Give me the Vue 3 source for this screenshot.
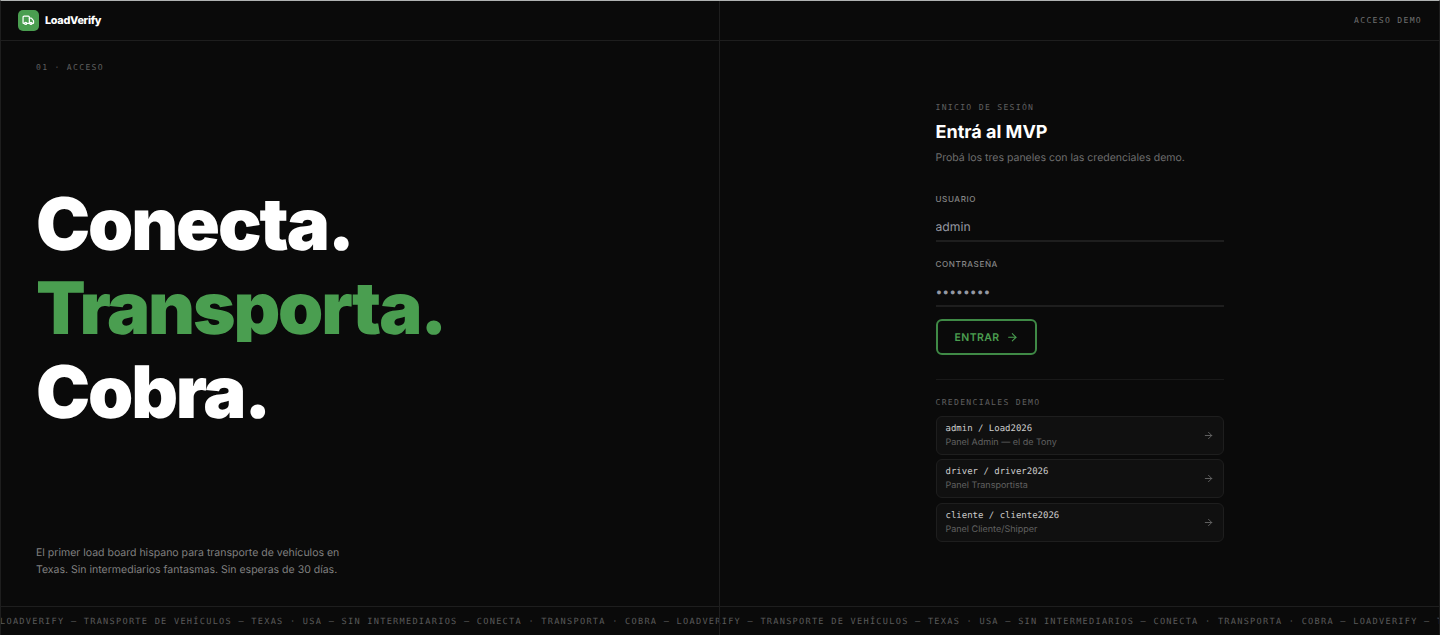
<template>
  <div class="page">
    <header class="nav">
      <div class="brand">
        <span class="brand-icon">
          <svg viewBox="0 0 24 24" class="icon-truck">
            <path d="M14 18V6a2 2 0 0 0-2-2H4a2 2 0 0 0-2 2v11a1 1 0 0 0 1 1h2" />
            <path d="M15 18H9" />
            <path d="M19 18h2a1 1 0 0 0 1-1v-3.65a1 1 0 0 0-.22-.624l-3.48-4.35A1 1 0 0 0 17.52 8H14" />
            <circle cx="17" cy="18" r="2" />
            <circle cx="7" cy="18" r="2" />
          </svg>
        </span>
        <span class="brand-name">LoadVerify</span>
      </div>
      <span class="mono nav-tag">ACCESO DEMO</span>
    </header>

    <main class="main">
      <section class="hero">
        <span class="mono hero-tag">01 · ACCESO</span>
        <h1 class="hero-title">
          <span>Conecta.</span>
          <span class="green">Transporta.</span>
          <span>Cobra.</span>
        </h1>
        <p class="hero-text">
          El primer load board hispano para transporte de vehículos en<br />
          Texas. Sin intermediarios fantasmas. Sin esperas de 30 días.
        </p>
      </section>

      <section class="access">
        <form class="form" @submit.prevent>
          <span class="mono">INICIO DE SESIÓN</span>
          <h2 class="form-title">Entrá al MVP</h2>
          <p class="form-text">Probá los tres paneles con las credenciales demo.</p>

          <label class="field">
            <span class="field-label">USUARIO</span>
            <input v-model="user" type="text" placeholder="admin" class="field-input" />
          </label>
          <label class="field">
            <span class="field-label">CONTRASEÑA</span>
            <input v-model="password" type="password" placeholder="••••••••" class="field-input" />
          </label>

          <button type="submit" class="submit">
            <span>ENTRAR</span>
            <svg viewBox="0 0 24 24" class="icon-arrow">
              <path d="M5 12h14" />
              <path d="m12 5 7 7-7 7" />
            </svg>
          </button>

          <div class="demo">
            <span class="mono demo-tag">CREDENCIALES DEMO</span>
            <button
              v-for="item in accounts"
              :key="item.user"
              type="button"
              class="account"
              @click="fill(item)"
            >
              <span class="account-info">
                <span class="account-key">{{ item.user }} / {{ item.password }}</span>
                <span class="account-panel">{{ item.panel }}</span>
              </span>
              <svg viewBox="0 0 24 24" class="icon-arrow small">
                <path d="M5 12h14" />
                <path d="m12 5 7 7-7 7" />
              </svg>
            </button>
          </div>
        </form>
      </section>
    </main>

    <footer class="ticker">
      <span v-for="n in 3" :key="n" class="ticker-item">{{ tickerText }}</span>
    </footer>
  </div>
</template>

<script setup>
import { ref } from 'vue'

const user = ref('')
const password = ref('')

const accounts = [
  { user: 'admin', password: 'Load2026', panel: 'Panel Admin — el de Tony' },
  { user: 'driver', password: 'driver2026', panel: 'Panel Transportista' },
  { user: 'cliente', password: 'cliente2026', panel: 'Panel Cliente/Shipper' },
]

const tickerText =
  'LOADVERIFY — TRANSPORTE DE VEHÍCULOS — TEXAS · USA — SIN INTERMEDIARIOS — CONECTA · TRANSPORTA · COBRA — '

const fill = (item) => {
  user.value = item.user
  password.value = item.password
}
</script>

<style>
body {
  margin: 0;
  background: #0a0a0a;
}
</style>

<style scoped>
.page {
  position: relative;
  display: flex;
  flex-direction: column;
  box-sizing: border-box;
  height: 635px;
  overflow: hidden;
  border: 1px solid #1e1e1e;
  border-top-color: #b0b3b2;
  border-bottom: none;
  background: #0a0a0a;
  color: #fff;
  font-family: Inter, sans-serif;
  text-rendering: geometricPrecision;
}

/* center rule, runs over nav and ticker */
.page::after {
  content: '';
  position: absolute;
  top: 0;
  bottom: 0;
  left: 718px;
  width: 1px;
  background: #1e1e1e;
}

svg {
  fill: none;
  stroke: currentColor;
  stroke-width: 2;
  stroke-linecap: round;
  stroke-linejoin: round;
}

button,
input {
  text-rendering: inherit;
}

.mono {
  font-family: 'DejaVu Sans Mono', monospace;
  font-size: 8.1px;
  line-height: 12px;
  letter-spacing: 1.3px;
  color: #5f5f5f;
}

.nav {
  display: flex;
  align-items: center;
  justify-content: space-between;
  height: 39px;
  padding: 0 17px;
  border-bottom: 1px solid #1e1e1e;
}

.brand {
  display: flex;
  align-items: center;
  gap: 6px;
}

.brand-icon {
  display: flex;
  align-items: center;
  justify-content: center;
  width: 21px;
  height: 21px;
  border-radius: 5px;
  background: #4a9e50;
}

.icon-truck {
  width: 12.6px;
  height: 12.6px;
  stroke-width: 2.3;
}

.brand-name {
  font-size: 10.8px;
  font-weight: 800;
  letter-spacing: -0.27px;
}

.nav-tag {
  margin-bottom: 1px;
  color: #707070;
}

.main {
  display: flex;
  flex: 1;
}

.hero {
  display: flex;
  flex-direction: column;
  justify-content: space-between;
  box-sizing: border-box;
  width: 50%;
  padding: 20px 35px 28px;
}

.hero-title {
  display: flex;
  flex-direction: column;
  gap: 18px;
  margin: 1px 0 0;
  font-size: 72.5px;
  font-weight: 900;
  line-height: 66px;
  letter-spacing: -2.16px;
}

.hero-title span {
  overflow: hidden;
}

.green {
  color: #4a9e50;
}

.hero-text {
  margin: 0;
  font-size: 10.53px;
  line-height: 17px;
  color: #808080;
}

.access {
  display: flex;
  justify-content: center;
  width: 50%;
}

.form {
  display: flex;
  flex-direction: column;
  width: 288px;
  padding-top: 60px;
}

.form-title {
  margin: 8px 0 0;
  font-size: 18px;
  font-weight: 700;
  line-height: 24px;
  letter-spacing: 0;
}

.form-text {
  margin: 5px 0 23px;
  font-size: 10.53px;
  line-height: 16px;
  color: #6e6e6e;
}

.field {
  display: flex;
  flex-direction: column;
  margin-bottom: 12px;
}

.field-label {
  font-size: 8.1px;
  font-weight: 500;
  line-height: 20px;
  letter-spacing: 0.6px;
  color: #868686;
}

.field-input {
  box-sizing: border-box;
  height: 33px;
  padding: 3px 0 0;
  border: none;
  border-bottom: 2px solid #1e1e1e;
  outline: none;
  background: transparent;
  color: #fff;
  font-family: inherit;
  font-size: 12.2px;
}

.field-input::placeholder {
  color: #9498a2;
}

.submit {
  display: flex;
  align-items: center;
  align-self: flex-start;
  gap: 6px;
  box-sizing: border-box;
  width: 101px;
  height: 36px;
  padding: 0 17px;
  border: 2px solid #3f8a46;
  border-radius: 6px;
  background: transparent;
  color: #4a9e50;
  font-family: inherit;
  font-size: 10.5px;
  font-weight: 600;
  letter-spacing: 0.4px;
}

.icon-arrow {
  flex-shrink: 0;
  width: 12.6px;
  height: 12.6px;
}

.demo {
  display: flex;
  flex-direction: column;
  gap: 4.5px;
  margin-top: 24px;
  padding-top: 16px;
  border-top: 1px solid #191919;
}

.demo-tag {
  margin-bottom: 3px;
}

.account {
  display: flex;
  align-items: center;
  justify-content: space-between;
  box-sizing: border-box;
  height: 39px;
  padding: 0 9px;
  border: 1px solid #1e1e1e;
  border-radius: 6px;
  background: #101010;
  color: #666;
  text-align: left;
  cursor: pointer;
}

.account-info {
  display: flex;
  flex-direction: column;
  padding-top: 1px;
}

.account-key {
  font-family: 'DejaVu Sans Mono', monospace;
  font-size: 9px;
  line-height: 13px;
  color: #ccc;
}

.account-panel {
  font-family: Inter, sans-serif;
  font-size: 9px;
  line-height: 13px;
  color: #606060;
}

.icon-arrow.small {
  width: 11px;
  height: 11px;
}

.ticker {
  display: flex;
  align-items: center;
  height: 28px;
  margin-left: -1px;
  border-top: 1px solid #1e1e1e;
  white-space: pre;
}

.ticker-item {
  padding-top: 2px;
  font-family: 'DejaVu Sans Mono', monospace;
  font-size: 8.6px;
  letter-spacing: 1.27px;
  color: #5a5a5a;
}
</style>
